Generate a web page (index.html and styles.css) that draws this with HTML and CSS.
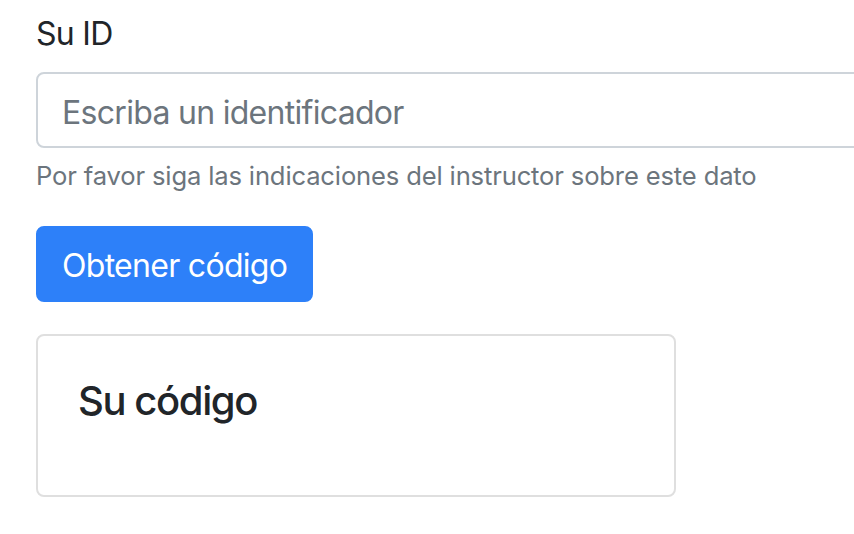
FILE: index.html
```html
<!DOCTYPE html>
<html lang="es">
<head>
<meta charset="utf-8">
<link rel="stylesheet" href="styles.css">
</head>
<body>
<main class="page">
  <form class="form">
    <div class="form-group">
      <label class="label" for="sid">Su ID</label>
      <input class="input" id="sid" type="text" placeholder="Escriba un identificador">
      <small class="help">Por favor siga las indicaciones del instructor sobre este dato</small>
    </div>
    <button class="btn" type="button">Obtener código</button>
  </form>
  <section class="card">
    <h5 class="card-title">Su código</h5>
  </section>
</main>
</body>
</html>
```
FILE: styles.css
```css
html, body {
  margin: 0;
  padding: 0;
  overflow: hidden;
  background: #fff;
}
body {
  font-family: Inter, "Noto Sans", sans-serif;
  color: #212529;
  font-size: 32px;
  line-height: 1.5;
  letter-spacing: -0.022em;
}
.page {
  padding: 10px 0 0 36px;
}
.form-group {
  display: flex;
  flex-direction: column;
  align-items: flex-start;
  margin-bottom: 32px;
}
.label {
  display: block;
  margin-bottom: 14px;
}
.input {
  box-sizing: border-box;
  width: 1100px;
  height: 76px;
  padding: 14px 24px 10px;
  border: 2px solid #ced4da;
  border-radius: 8px;
  font-family: inherit;
  font-size: 32px;
  letter-spacing: -0.022em;
  color: #495057;
  background: #fff;
  outline: none;
}
.input::placeholder {
  color: #6c757d;
  opacity: 1;
}
.help {
  display: block;
  margin-top: 9px;
  margin-bottom: -1px;
  font-size: 25.6px;
  line-height: 38.4px;
  letter-spacing: -0.006em;
  color: #6c757d;
}
.btn {
  display: block;
  box-sizing: border-box;
  height: 76px;
  padding: 14px 24px 10px;
  border: 2px solid #2d80f9;
  border-radius: 8px;
  background: #2d80f9;
  color: #fff;
  font-family: inherit;
  font-size: 32px;
  letter-spacing: -0.022em;
  line-height: 48px;
}
.card {
  box-sizing: border-box;
  width: 640px;
  height: 163px;
  margin-top: 32px;
  padding: 41px 40px 39px;
  border: 2px solid #dfdfdf;
  border-radius: 8px;
}
.card-title {
  margin: 0;
  font-size: 40px;
  font-weight: 500;
  line-height: 48px;
  letter-spacing: -0.035em;
}
```
